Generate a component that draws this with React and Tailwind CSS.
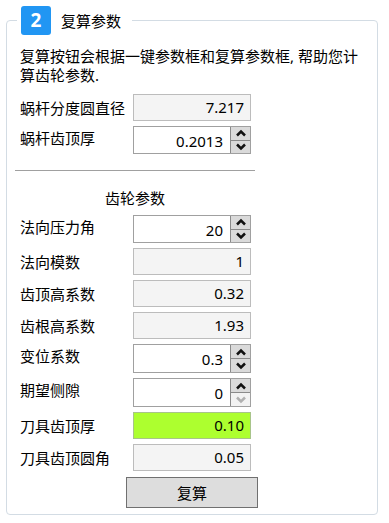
import React from "react";

const font = "font-['Noto_Sans','Noto_Sans_CJK_SC',sans-serif]";

function Chevron({ up, disabled }) {
    return (
        <svg width="12" height="8" viewBox="0 0 12 8">
            <path
                d={up ? "M2 6.5 L6 2.5 L10 6.5" : "M2 1.5 L6 5.5 L10 1.5"}
                fill="none"
                stroke={disabled ? "#b0b0b0" : "#111"}
                strokeWidth="2.5"
            />
        </svg>
    );
}

function ReadOnlyRow({ label, value, green }) {
    return (
        <div className="flex items-center h-[27px]">
            <div className="w-[113px] text-[15px] leading-[20px]">{label}</div>
            <div
                className={
                    "w-[118px] h-full flex items-center justify-end pr-[6px] border text-[15px] " +
                    (green ? "bg-[#adff2f] border-[#a8c48a]" : "bg-[#f4f4f4] border-[#bcbcbc]")
                }
            >
                {value}
            </div>
        </div>
    );
}

function SpinRow({ label, value, downDisabled, tall }) {
    return (
        <div className={"flex " + (tall ? "h-[29px]" : "h-[28px]")}>
            <div className="w-[113px] text-[15px] leading-[20px] pt-[2px]">{label}</div>
            <div className="w-[118px] h-full flex border border-[#a0a0a0] bg-white">
                <div className="flex-1 flex items-center justify-end pr-[7px] pt-[2px] text-[15px]">{value}</div>
                <div className="w-[20px] flex flex-col border-l border-[#8a8a8a]">
                    <div className="flex-1 flex items-center justify-center bg-[#dadada] border-b border-[#8a8a8a]">
                        <Chevron up />
                    </div>
                    <div className={"flex-1 flex items-center justify-center " + (downDisabled ? "bg-[#f2f2f2]" : "bg-[#dadada]")}>
                        <Chevron disabled={downDisabled} />
                    </div>
                </div>
            </div>
        </div>
    );
}

export default function App() {
    return (
        <div className={"w-[389px] h-[523px] bg-white text-black " + font}>
            <fieldset className="ml-[6px] mt-[6px] w-[372px] h-[509px] border border-[#d3dce4] rounded-[4px] px-0 pb-0">
                <legend className="ml-[10px] px-[4px] flex items-center">
                    <div className="w-[30px] h-[29px] rounded-[3px] bg-[#2196f3] text-white text-[19px] font-bold flex items-center justify-center">
                        2
                    </div>
                    <span className="ml-[10px] mr-[7px] text-[15px] leading-[20px]">复算参数</span>
                </legend>

                <div className="px-[13px]">
                    <p className="mt-[12px] text-[15px] leading-[19px] w-[340px]">
                        复算按钮会根据一键参数框和复算参数框, 帮助您计算齿轮参数.
                    </p>

                    <div className="mt-[9px] flex flex-col gap-[5px]">
                        <ReadOnlyRow label="蜗杆分度圆直径" value="7.217" />
                        <SpinRow label="蜗杆齿顶厚" value="0.2013" />
                    </div>

                    <div className="mt-[16px] ml-[-5px] w-[240px] border-t border-[#a0a0a0]"></div>

                    <div className="mt-[17px] ml-[-5px] w-[240px] text-center text-[15px] leading-[20px]">齿轮参数</div>

                    <div className="mt-[7px] flex flex-col gap-[5px]">
                        <SpinRow label="法向压力角" value="20" />
                        <ReadOnlyRow label="法向模数" value="1" />
                        <ReadOnlyRow label="齿顶高系数" value="0.32" />
                        <ReadOnlyRow label="齿根高系数" value="1.93" />
                        <SpinRow label="变位系数" value="0.3" tall />
                        <SpinRow label="期望侧隙" value="0" downDisabled tall />
                        <ReadOnlyRow label="刀具齿顶厚" value="0.10" green />
                        <ReadOnlyRow label="刀具齿顶圆角" value="0.05" />
                    </div>

                    <button className="mt-[6px] ml-[106px] w-[132px] h-[31px] bg-[#dddddd] border border-[#707070] text-[15px] leading-[20px]">
                        复算
                    </button>
                </div>
            </fieldset>
        </div>
    );
}
